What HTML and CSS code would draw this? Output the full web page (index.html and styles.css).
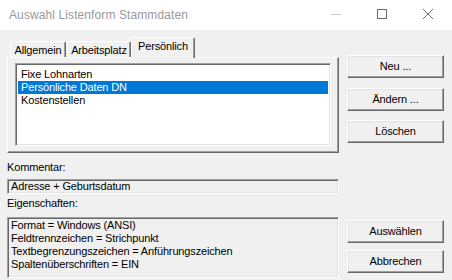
FILE: index.html
```html
<!DOCTYPE html>
<html>
<head>
<meta charset="utf-8">
<link rel="stylesheet" href="styles.css">
</head>
<body>
<div class="window">
  <div class="titlebar">
    <span class="title">Auswahl Listenform Stammdaten</span>
    <div class="controls">
      <svg class="ctl" width="46" height="30" viewBox="0 0 46 30"><line x1="18" y1="14.5" x2="28" y2="14.5" stroke="#cccccc" stroke-width="1"/></svg>
      <svg class="ctl" width="46" height="30" viewBox="0 0 46 30"><rect x="18.5" y="9.5" width="9" height="9" fill="none" stroke="#6b6b6b" stroke-width="1"/></svg>
      <svg class="ctl" width="46" height="30" viewBox="0 0 46 30"><path d="M18 9 L28 19 M28 9 L18 19" stroke="#6b6b6b" stroke-width="1" fill="none"/></svg>
    </div>
  </div>
  <div class="content">
    <div class="leftcol">
      <div class="tabs">
        <div class="tab t1">Allgemein</div>
        <div class="tab t2">Arbeitsplatz</div>
        <div class="tab active">Persönlich</div>
      </div>
      <div class="panel">
        <div class="list sunken">
          <div class="row">Fixe Lohnarten</div>
          <div class="row sel">Persönliche Daten DN</div>
          <div class="row">Kostenstellen</div>
        </div>
      </div>
      <div class="label lbl1">Kommentar:</div>
      <div class="field comment sunken">Adresse + Geburtsdatum</div>
      <div class="label lbl2">Eigenschaften:</div>
      <div class="field props sunken">
        <div class="pline">Format = Windows (ANSI)</div>
        <div class="pline">Feldtrennzeichen = Strichpunkt</div>
        <div class="pline">Textbegrenzungszeichen = Anführungszeichen</div>
        <div class="pline">Spaltenüberschriften = EIN</div>
      </div>
    </div>
    <div class="rightcol">
      <div class="btn b-neu">Neu ...</div>
      <div class="btn b-aend">Ändern ...</div>
      <div class="btn b-loe">Löschen</div>
      <div class="btn b-ausw">Auswählen</div>
      <div class="btn b-abbr">Abbrechen</div>
    </div>
  </div>
</div>
</body>
</html>
```

FILE: styles.css
```css
html, body {
  margin: 0;
  padding: 0;
}
body {
  width: 452px;
  height: 280px;
  overflow: hidden;
  font-family: "Liberation Sans", Arial, sans-serif;
  font-size: 11px;
  color: #000;
  background: #f0f0f0;
}
.window {
  width: 452px;
  height: 280px;
  display: flex;
  flex-direction: column;
}
.titlebar {
  height: 30px;
  background: #ffffff;
  display: flex;
  align-items: center;
  justify-content: space-between;
  flex: none;
}
.title {
  font-size: 12px;
  color: #999999;
  padding-left: 9px;
  letter-spacing: 0.1px;
}
.controls {
  display: flex;
  align-items: center;
  margin-right: 1px;
}
.ctl {
  display: block;
}
.content {
  flex: 1;
  display: flex;
  gap: 8px;
  padding: 7px 8px 0 7px;
  letter-spacing: -0.15px;
}
.leftcol {
  width: 332px;
  display: flex;
  flex-direction: column;
}
.tabs {
  height: 20px;
  display: flex;
  align-items: flex-end;
  padding-left: 3px;
}
.tab {
  height: 16px;
  box-sizing: border-box;
  border-style: solid;
  border-width: 1px 1px 0 1px;
  border-color: #ffffff #696969 transparent #ffffff;
  box-shadow: inset -1px 0 #a0a0a0;
  border-radius: 2px 2px 0 0;
  display: flex;
  align-items: center;
  justify-content: center;
  line-height: 13px;
  padding-top: 1px;
}
.t1 { width: 56px; }
.t2 { width: 64px; margin-left: 1px; }
.tab.active {
  width: 64px;
  height: 21px;
  margin-left: 0;
  margin-bottom: -1px;
  position: relative;
  z-index: 1;
  background: #f0f0f0;
  padding-top: 0;
  padding-bottom: 3px;
}
.panel {
  height: 96px;
  box-sizing: border-box;
  border: 1px solid;
  border-color: #ffffff #696969 #696969 #ffffff;
  box-shadow: inset -1px -1px #a0a0a0;
  padding: 5px 7px 0 7px;
}
.sunken {
  box-sizing: border-box;
  border: 1px solid;
  border-color: #a0a0a0 #ffffff #ffffff #a0a0a0;
  box-shadow: inset 1px 1px #696969, inset -1px -1px #e3e3e3;
}
.list {
  height: 83px;
  width: 316px;
  background: #ffffff;
  padding: 4px 2px 0 2px;
}
.row {
  height: 13px;
  line-height: 13px;
  padding-left: 3px;
  white-space: nowrap;
}
.row.sel {
  background: #0078d7;
  color: #ffffff;
}
.label {
  height: 13px;
  line-height: 13px;
}
.lbl1 { margin-top: 8px; }
.lbl2 { margin-top: 3px; }
.field {
  background: #f0f0f0;
  width: 332px;
}
.comment {
  margin-top: 5px;
  height: 15px;
  line-height: 13px;
  padding-left: 3px;
}
.props {
  margin-top: 7px;
  height: 61px;
  padding: 1px 0 0 3px;
}
.pline {
  height: 13px;
  line-height: 13px;
  white-space: nowrap;
}
.rightcol {
  width: 97px;
  display: flex;
  flex-direction: column;
}
.btn {
  height: 23px;
  box-sizing: border-box;
  border: 1px solid;
  border-color: #ffffff #696969 #696969 #ffffff;
  box-shadow: inset -1px -1px #a0a0a0, inset 1px 1px #e3e3e3;
  background: #f0f0f0;
  display: flex;
  align-items: center;
  justify-content: center;
  padding-bottom: 1px;
}
.b-neu { margin-top: 18px; }
.b-aend { margin-top: 10px; }
.b-loe { margin-top: 9px; }
.b-ausw { margin-top: 77px; }
.b-abbr { margin-top: 7px; }
```
